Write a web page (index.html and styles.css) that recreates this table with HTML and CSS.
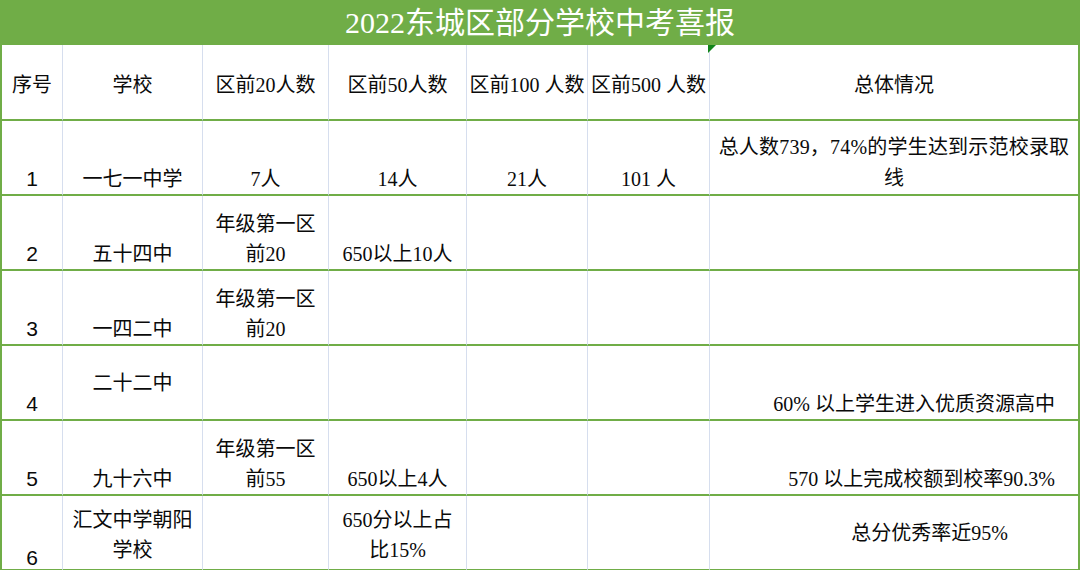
FILE: index.html
```html
<!DOCTYPE html>
<html lang="zh-CN">
<head>
<meta charset="utf-8">
<title>2022东城区部分学校中考喜报</title>
<link rel="stylesheet" href="styles.css">
</head>
<body>
<div class="sheet">
  <div class="title">2022东城区部分学校中考喜报</div>
  <div class="grid">
    <div class="cell head">序号</div>
    <div class="cell head">学校</div>
    <div class="cell head">区前20人数</div>
    <div class="cell head">区前50人数</div>
    <div class="cell head">区前100 人数</div>
    <div class="cell head">区前500 人数</div>
    <div class="cell head last note">总体情况</div>

    <div class="cell num">1</div>
    <div class="cell">一七一中学</div>
    <div class="cell">7人</div>
    <div class="cell">14人</div>
    <div class="cell">21人</div>
    <div class="cell">101 人</div>
    <div class="cell last wide">总人数739，74%的学生达到示范校录取<br>线</div>

    <div class="cell num">2</div>
    <div class="cell">五十四中</div>
    <div class="cell">年级第一区<br>前20</div>
    <div class="cell">650以上10人</div>
    <div class="cell"></div>
    <div class="cell"></div>
    <div class="cell last"></div>

    <div class="cell num">3</div>
    <div class="cell">一四二中</div>
    <div class="cell">年级第一区<br>前20</div>
    <div class="cell"></div>
    <div class="cell"></div>
    <div class="cell"></div>
    <div class="cell last"></div>

    <div class="cell num">4</div>
    <div class="cell lift">二十二中</div>
    <div class="cell"></div>
    <div class="cell"></div>
    <div class="cell"></div>
    <div class="cell"></div>
    <div class="cell last right">60% 以上学生进入优质资源高中</div>

    <div class="cell num">5</div>
    <div class="cell">九十六中</div>
    <div class="cell">年级第一区<br>前55</div>
    <div class="cell">650以上4人</div>
    <div class="cell"></div>
    <div class="cell"></div>
    <div class="cell last right">570 以上完成校额到校率90.3%</div>

    <div class="cell num end"><span class="drop">6</span></div>
    <div class="cell end">汇文中学朝阳<br>学校</div>
    <div class="cell end"></div>
    <div class="cell end">650分以上占<br>比15%</div>
    <div class="cell end"></div>
    <div class="cell end"></div>
    <div class="cell last lift shift">总分优秀率近95%</div>
  </div>
</div>
</body>
</html>
```

FILE: styles.css
```css
html, body {
  margin: 0;
  padding: 0;
  background: #ffffff;
  overflow: hidden;
}

.sheet {
  width: 1080px;
  height: 570px;
  font-family: "Liberation Serif", "Noto Sans CJK SC", serif;
  color: #0a0a0a;
}

.title {
  height: 45px;
  background: #70ad47;
  color: #ffffff;
  font-size: 30px;
  line-height: 45px;
  text-align: center;
}

.grid {
  display: grid;
  grid-template-columns: 61px 140px 126px 138px 121px 122px 1fr;
  grid-template-rows: 76px repeat(6, 75px);
  border-left: 2px solid #70ad47;
  border-right: 2px solid #70ad47;
  box-sizing: border-box;
  width: 1080px;
}

.cell {
  position: relative;
  display: flex;
  flex-direction: column;
  justify-content: flex-end;
  align-items: center;
  text-align: center;
  font-size: 20px;
  line-height: 30px;
  border-right: 1px solid #d6deee;
  border-bottom: 2px solid #70ad47;
  box-sizing: border-box;
  white-space: nowrap;
}

.cell.last {
  border-right: none;
}

.cell.head {
  justify-content: center;
  padding-top: 5px;
}

.cell.wide {
  line-height: 31px;
  letter-spacing: 0.2px;
}

.cell.num {
  font-family: "Liberation Sans", sans-serif;
  font-size: 21px;
}

.cell.lift {
  padding-bottom: 21px;
}

.cell.end {
  padding-bottom: 4px;
}

.cell.num.end {
  padding-bottom: 0;
}

.drop {
  position: relative;
  top: 4px;
}

.cell.right {
  align-items: flex-end;
  padding-right: 23px;
}

.cell.shift {
  align-items: flex-end;
  padding-right: 70px;
}

.note::before {
  content: "";
  position: absolute;
  left: -2px;
  top: 0;
  width: 0;
  height: 0;
  border-top: 8px solid #12851a;
  border-right: 8px solid transparent;
}
```
